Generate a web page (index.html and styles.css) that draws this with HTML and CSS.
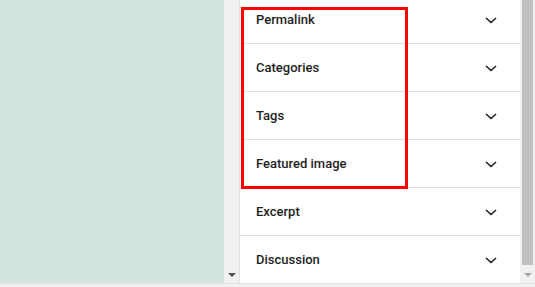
FILE: index.html
```html
<!DOCTYPE html>
<html lang="en">
  <head>
    <meta charset="UTF-8" />
    <title>Post settings</title>
    <link rel="stylesheet" href="styles.css">
  </head>
  <body>
    <div class="screen">
      <div class="canvas"></div>
      <div class="scroll scroll-left">
        <span class="arrow"></span>
      </div>
      <div class="panel">
        <div class="list">
          <div class="row"><span>Permalink</span><svg viewBox="0 0 24 24"><path d="M7 10l5 4.5 5-4.5"/></svg></div>
          <div class="row"><span>Categories</span><svg viewBox="0 0 24 24"><path d="M7 10l5 4.5 5-4.5"/></svg></div>
          <div class="row"><span>Tags</span><svg viewBox="0 0 24 24"><path d="M7 10l5 4.5 5-4.5"/></svg></div>
          <div class="row"><span>Featured image</span><svg viewBox="0 0 24 24"><path d="M7 10l5 4.5 5-4.5"/></svg></div>
          <div class="row"><span>Excerpt</span><svg viewBox="0 0 24 24"><path d="M7 10l5 4.5 5-4.5"/></svg></div>
          <div class="row"><span>Discussion</span><svg viewBox="0 0 24 24"><path d="M7 10l5 4.5 5-4.5"/></svg></div>
        </div>
      </div>
      <div class="scroll scroll-right">
        <div class="thumb"></div>
        <span class="arrow"></span>
      </div>
      <div class="highlight"></div>
    </div>
  </body>
</html>
```

FILE: styles.css
```css
body {
  margin: 0;
  font-family: Roboto, "Liberation Sans", sans-serif;
  background-color: #f0f0f0;
}
.screen {
  position: relative;
  display: flex;
  height: 283px;
  width: 535px;
  border-bottom: 1px solid #e2e2e2;
}
.canvas {
  width: 224px;
  background-color: #d3e4de;
}
.scroll {
  width: 15px;
  background-color: #f1f1f1;
  display: flex;
  flex-direction: column;
  align-items: center;
  justify-content: flex-end;
}
.scroll-left {
  border-right: 1px solid #e4e4e4;
}
.arrow {
  width: 0;
  height: 0;
  border-left: 4px solid transparent;
  border-right: 4px solid transparent;
  border-top: 4px solid #505050;
  margin-bottom: 6px;
}
.scroll-right .arrow {
  border-top-color: #a3a3a3;
}
.scroll-right {
  justify-content: space-between;
}
.thumb {
  width: 11px;
  height: 265px;
  background-color: #c1c1c1;
}
.panel {
  width: 280px;
  background-color: white;
  overflow: hidden;
}
.list {
  margin-top: -4px;
}
.row {
  display: flex;
  align-items: center;
  justify-content: space-between;
  height: 47px;
  padding: 0 17px 0 16px;
  border-bottom: 1px solid #e0e0e0;
  font-size: 13px;
  font-weight: 500;
  color: #1e1e1e;
}
.row svg {
  width: 24px;
  height: 24px;
  fill: none;
  stroke: #1e1e1e;
  stroke-width: 1.6;
}
.highlight {
  position: absolute;
  left: 241px;
  top: 7px;
  width: 161px;
  height: 176px;
  border: 3px solid #ff0000;
}
```
